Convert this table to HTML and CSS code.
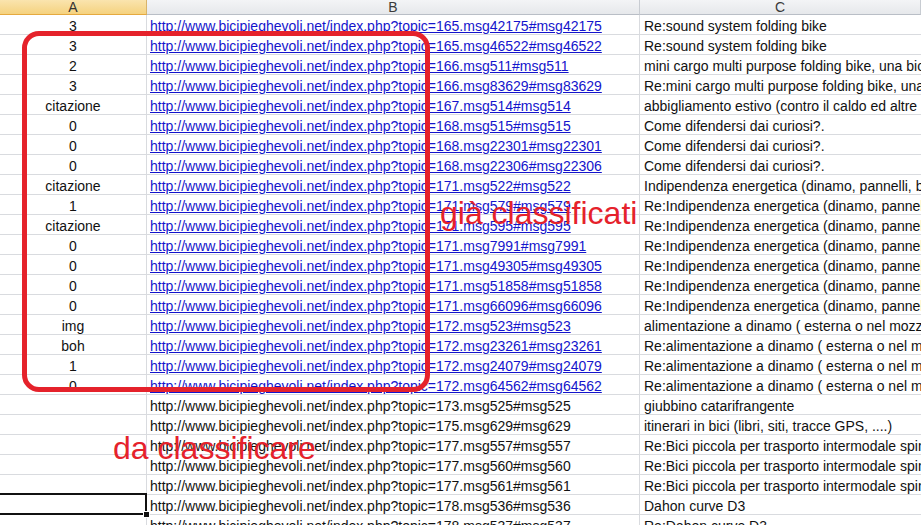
FILE: index.html
```html
<!DOCTYPE html>
<html>
<head>
<meta charset="utf-8">
<link rel="stylesheet" href="styles.css">
</head>
<body>
<div class="sheet">
  <div class="row head">
    <div class="cell hcell hsel">A</div>
    <div class="cell hcell">B</div>
    <div class="cell hcell">C</div>
  </div>
  <div class="row"><div class="cell ca">3</div><div class="cell cb"><a>http://www.bicipieghevoli.net/index.php?topic=165.msg42175#msg42175</a></div><div class="cell cc">Re:sound system folding bike</div></div>
  <div class="row"><div class="cell ca">3</div><div class="cell cb"><a>http://www.bicipieghevoli.net/index.php?topic=165.msg46522#msg46522</a></div><div class="cell cc">Re:sound system folding bike</div></div>
  <div class="row"><div class="cell ca">2</div><div class="cell cb"><a>http://www.bicipieghevoli.net/index.php?topic=166.msg511#msg511</a></div><div class="cell cc">mini cargo multi purpose folding bike, una bici da carico</div></div>
  <div class="row"><div class="cell ca">3</div><div class="cell cb"><a>http://www.bicipieghevoli.net/index.php?topic=166.msg83629#msg83629</a></div><div class="cell cc">Re:mini cargo multi purpose folding bike, una bici da carico</div></div>
  <div class="row"><div class="cell ca">citazione</div><div class="cell cb"><a>http://www.bicipieghevoli.net/index.php?topic=167.msg514#msg514</a></div><div class="cell cc">abbigliamento estivo (contro il caldo ed altre cose)</div></div>
  <div class="row"><div class="cell ca">0</div><div class="cell cb"><a>http://www.bicipieghevoli.net/index.php?topic=168.msg515#msg515</a></div><div class="cell cc">Come difendersi dai curiosi?.</div></div>
  <div class="row"><div class="cell ca">0</div><div class="cell cb"><a>http://www.bicipieghevoli.net/index.php?topic=168.msg22301#msg22301</a></div><div class="cell cc">Come difendersi dai curiosi?.</div></div>
  <div class="row"><div class="cell ca">0</div><div class="cell cb"><a>http://www.bicipieghevoli.net/index.php?topic=168.msg22306#msg22306</a></div><div class="cell cc">Come difendersi dai curiosi?.</div></div>
  <div class="row"><div class="cell ca">citazione</div><div class="cell cb"><a>http://www.bicipieghevoli.net/index.php?topic=171.msg522#msg522</a></div><div class="cell cc">Indipendenza energetica (dinamo, pannelli, batterie)</div></div>
  <div class="row"><div class="cell ca">1</div><div class="cell cb"><a>http://www.bicipieghevoli.net/index.php?topic=171.msg579#msg579</a></div><div class="cell cc">Re:Indipendenza energetica (dinamo, pannelli, batterie)</div></div>
  <div class="row"><div class="cell ca">citazione</div><div class="cell cb"><a>http://www.bicipieghevoli.net/index.php?topic=171.msg595#msg595</a></div><div class="cell cc">Re:Indipendenza energetica (dinamo, pannelli, batterie)</div></div>
  <div class="row"><div class="cell ca">0</div><div class="cell cb"><a>http://www.bicipieghevoli.net/index.php?topic=171.msg7991#msg7991</a></div><div class="cell cc">Re:Indipendenza energetica (dinamo, pannelli, batterie)</div></div>
  <div class="row"><div class="cell ca">0</div><div class="cell cb"><a>http://www.bicipieghevoli.net/index.php?topic=171.msg49305#msg49305</a></div><div class="cell cc">Re:Indipendenza energetica (dinamo, pannelli, batterie)</div></div>
  <div class="row"><div class="cell ca">0</div><div class="cell cb"><a>http://www.bicipieghevoli.net/index.php?topic=171.msg51858#msg51858</a></div><div class="cell cc">Re:Indipendenza energetica (dinamo, pannelli, batterie)</div></div>
  <div class="row"><div class="cell ca">0</div><div class="cell cb"><a>http://www.bicipieghevoli.net/index.php?topic=171.msg66096#msg66096</a></div><div class="cell cc">Re:Indipendenza energetica (dinamo, pannelli, batterie)</div></div>
  <div class="row"><div class="cell ca">img</div><div class="cell cb"><a>http://www.bicipieghevoli.net/index.php?topic=172.msg523#msg523</a></div><div class="cell cc">alimentazione a dinamo ( esterna o nel mozzo )</div></div>
  <div class="row"><div class="cell ca">boh</div><div class="cell cb"><a>http://www.bicipieghevoli.net/index.php?topic=172.msg23261#msg23261</a></div><div class="cell cc">Re:alimentazione a dinamo ( esterna o nel mozzo )</div></div>
  <div class="row"><div class="cell ca">1</div><div class="cell cb"><a>http://www.bicipieghevoli.net/index.php?topic=172.msg24079#msg24079</a></div><div class="cell cc">Re:alimentazione a dinamo ( esterna o nel mozzo )</div></div>
  <div class="row"><div class="cell ca">0</div><div class="cell cb"><a>http://www.bicipieghevoli.net/index.php?topic=172.msg64562#msg64562</a></div><div class="cell cc">Re:alimentazione a dinamo ( esterna o nel mozzo )</div></div>
  <div class="row"><div class="cell ca"></div><div class="cell cb">http://www.bicipieghevoli.net/index.php?topic=173.msg525#msg525</div><div class="cell cc">giubbino catarifrangente</div></div>
  <div class="row"><div class="cell ca"></div><div class="cell cb">http://www.bicipieghevoli.net/index.php?topic=175.msg629#msg629</div><div class="cell cc">itinerari in bici (libri, siti, tracce GPS, ....)</div></div>
  <div class="row"><div class="cell ca"></div><div class="cell cb">http://www.bicipieghevoli.net/index.php?topic=177.msg557#msg557</div><div class="cell cc">Re:Bici piccola per trasporto intermodale spinto</div></div>
  <div class="row"><div class="cell ca"></div><div class="cell cb">http://www.bicipieghevoli.net/index.php?topic=177.msg560#msg560</div><div class="cell cc">Re:Bici piccola per trasporto intermodale spinto</div></div>
  <div class="row"><div class="cell ca"></div><div class="cell cb">http://www.bicipieghevoli.net/index.php?topic=177.msg561#msg561</div><div class="cell cc">Re:Bici piccola per trasporto intermodale spinto</div></div>
  <div class="row"><div class="cell ca active"><span class="handle"></span></div><div class="cell cb">http://www.bicipieghevoli.net/index.php?topic=178.msg536#msg536</div><div class="cell cc">Dahon curve D3</div></div>
  <div class="row"><div class="cell ca"></div><div class="cell cb">http://www.bicipieghevoli.net/index.php?topic=178.msg537#msg537</div><div class="cell cc">Re:Dahon curve D3</div></div>

  <div class="mark-box"></div>
  <div class="mark-text mark-done">già classificati</div>
  <div class="mark-text mark-todo">da classificare</div>
</div>
</body>
</html>
```
FILE: styles.css
```css
html, body {
  margin: 0;
  padding: 0;
  background: #ffffff;
  overflow: hidden;
}

.sheet {
  position: relative;
  width: 921px;
  height: 525px;
  overflow: hidden;
  font-family: "Liberation Sans", Arial, sans-serif;
  font-size: 14px;
  color: #111111;
}

.row {
  display: grid;
  grid-template-columns: 147px 493px 1fr;
  height: 20px;
}

.cell {
  box-sizing: border-box;
  height: 20px;
  line-height: 20px;
  padding-top: 1px;
  border-right: 1px solid #d9dbdf;
  border-bottom: 1px solid #d9dbdf;
  white-space: nowrap;
  overflow: hidden;
  position: relative;
}

.head {
  height: 15px;
}

.hcell {
  height: 15px;
  line-height: 14px;
  padding-top: 0;
  text-align: center;
  font-size: 14px;
  color: #3a3a3a;
  background: linear-gradient(#f3f4f6, #e6e8eb);
  border-right: 1px solid #c8ccd2;
  border-bottom: 1px solid #b9bec6;
}

.hsel {
  background: linear-gradient(#fae4ae, #f5d27f);
  border-bottom: 1px solid #e5a93f;
  border-right: 1px solid #d8b36a;
  color: #333333;
}

.ca {
  text-align: center;
}

.cb {
  padding-left: 3px;
}

.cc {
  padding-left: 4px;
  border-right: none;
}

.cb a {
  color: #1414cc;
  text-decoration: underline;
}

.active {
  overflow: visible;
}

.active::before {
  content: "";
  position: absolute;
  left: -2px;
  top: -2px;
  right: -1px;
  bottom: -1px;
  border: 2px solid #111111;
}

.handle {
  position: absolute;
  right: -4px;
  bottom: -4px;
  width: 5px;
  height: 5px;
  background: #111111;
  border: 1px solid #ffffff;
  z-index: 2;
}

.mark-box {
  position: absolute;
  left: 22px;
  top: 31px;
  width: 408px;
  height: 361px;
  box-sizing: border-box;
  border: 5px solid #e5222b;
  border-radius: 17px;
}

.mark-text {
  position: absolute;
  color: #e5222b;
  font-family: "Liberation Sans", Arial, sans-serif;
  font-size: 32px;
  line-height: 36px;
  white-space: nowrap;
}

.mark-done {
  left: 440px;
  top: 195px;
}

.mark-todo {
  left: 113px;
  top: 430px;
}
```
